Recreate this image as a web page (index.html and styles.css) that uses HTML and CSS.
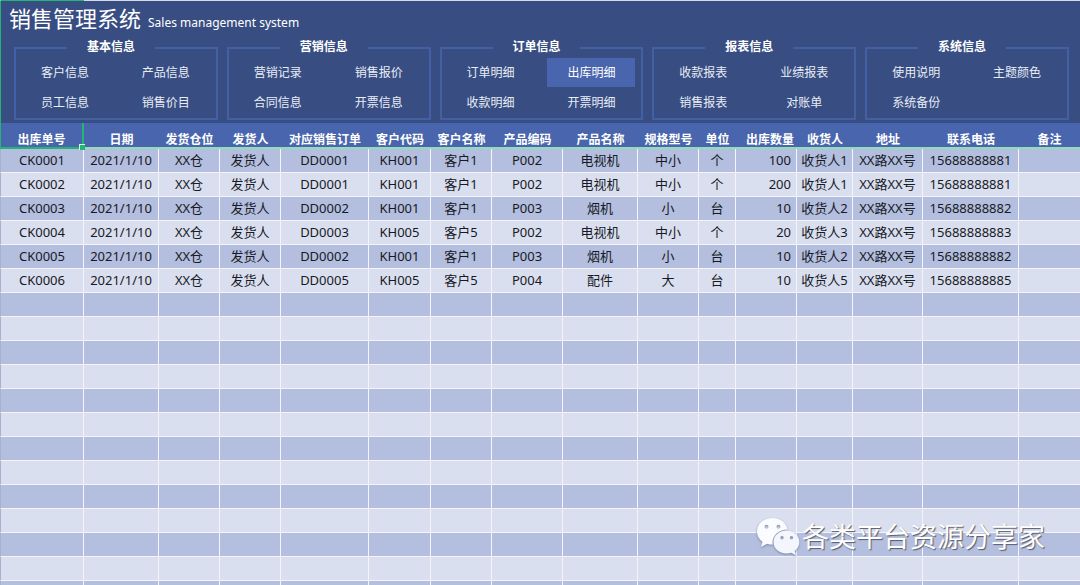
FILE: index.html
```html
<!DOCTYPE html>
<html lang="zh-CN">
<head>
<meta charset="utf-8">
<meta name="viewport" content="width=device-width, initial-scale=1">
<title>销售管理系统</title>
<link rel="stylesheet" href="styles.css">
</head>
<body>
<header class="top">
  <div class="brand"><h1>销售管理系统</h1><span>Sales management system</span></div>
  <nav class="panels">
    <section class="panel"><h2>基本信息</h2><div class="links"><a href="#">客户信息</a><a href="#">产品信息</a><a href="#">员工信息</a><a href="#">销售价目</a></div></section>
    <section class="panel"><h2>营销信息</h2><div class="links"><a href="#">营销记录</a><a href="#">销售报价</a><a href="#">合同信息</a><a href="#">开票信息</a></div></section>
    <section class="panel"><h2>订单信息</h2><div class="links"><a href="#">订单明细</a><a href="#" class="active" aria-current="page">出库明细</a><a href="#">收款明细</a><a href="#">开票明细</a></div></section>
    <section class="panel"><h2>报表信息</h2><div class="links"><a href="#">收款报表</a><a href="#">业绩报表</a><a href="#">销售报表</a><a href="#">对账单</a></div></section>
    <section class="panel"><h2>系统信息</h2><div class="links"><a href="#">使用说明</a><a href="#">主题颜色</a><a href="#">系统备份</a></div></section>
  </nav>
</header>
<main>
<table class="sheet">
  <colgroup>
    <col class="w84"><col class="w75"><col class="w61"><col class="w61"><col class="w88"><col class="w62"><col class="w61"><col class="w71"><col class="w75"><col class="w61"><col class="w37"><col class="w61"><col class="w56"><col class="w70"><col class="w96"><col>
  </colgroup>
  <thead>
    <tr><th class="selected">出库单号</th><th>日期</th><th>发货仓位</th><th>发货人</th><th>对应销售订单</th><th>客户代码</th><th>客户名称</th><th>产品编码</th><th>产品名称</th><th>规格型号</th><th>单位</th><th class="num">出库数量</th><th>收货人</th><th>地址</th><th>联系电话</th><th>备注</th></tr>
  </thead>
  <tbody>
    <tr><td>CK0001</td><td>2021/1/10</td><td>XX仓</td><td>发货人</td><td>DD0001</td><td>KH001</td><td>客户1</td><td>P002</td><td>电视机</td><td>中小</td><td>个</td><td class="num">100</td><td>收货人1</td><td>XX路XX号</td><td>15688888881</td><td></td></tr>
    <tr><td>CK0002</td><td>2021/1/10</td><td>XX仓</td><td>发货人</td><td>DD0001</td><td>KH001</td><td>客户1</td><td>P002</td><td>电视机</td><td>中小</td><td>个</td><td class="num">200</td><td>收货人1</td><td>XX路XX号</td><td>15688888881</td><td></td></tr>
    <tr><td>CK0003</td><td>2021/1/10</td><td>XX仓</td><td>发货人</td><td>DD0002</td><td>KH001</td><td>客户1</td><td>P003</td><td>烟机</td><td>小</td><td>台</td><td class="num">10</td><td>收货人2</td><td>XX路XX号</td><td>15688888882</td><td></td></tr>
    <tr><td>CK0004</td><td>2021/1/10</td><td>XX仓</td><td>发货人</td><td>DD0003</td><td>KH005</td><td>客户5</td><td>P002</td><td>电视机</td><td>中小</td><td>个</td><td class="num">20</td><td>收货人3</td><td>XX路XX号</td><td>15688888883</td><td></td></tr>
    <tr><td>CK0005</td><td>2021/1/10</td><td>XX仓</td><td>发货人</td><td>DD0002</td><td>KH001</td><td>客户1</td><td>P003</td><td>烟机</td><td>小</td><td>台</td><td class="num">10</td><td>收货人2</td><td>XX路XX号</td><td>15688888882</td><td></td></tr>
    <tr><td>CK0006</td><td>2021/1/10</td><td>XX仓</td><td>发货人</td><td>DD0005</td><td>KH005</td><td>客户5</td><td>P004</td><td>配件</td><td>大</td><td>台</td><td class="num">10</td><td>收货人5</td><td>XX路XX号</td><td>15688888885</td><td></td></tr>
    <tr><td></td><td></td><td></td><td></td><td></td><td></td><td></td><td></td><td></td><td></td><td></td><td></td><td></td><td></td><td></td><td></td></tr>
    <tr><td></td><td></td><td></td><td></td><td></td><td></td><td></td><td></td><td></td><td></td><td></td><td></td><td></td><td></td><td></td><td></td></tr>
    <tr><td></td><td></td><td></td><td></td><td></td><td></td><td></td><td></td><td></td><td></td><td></td><td></td><td></td><td></td><td></td><td></td></tr>
    <tr><td></td><td></td><td></td><td></td><td></td><td></td><td></td><td></td><td></td><td></td><td></td><td></td><td></td><td></td><td></td><td></td></tr>
    <tr><td></td><td></td><td></td><td></td><td></td><td></td><td></td><td></td><td></td><td></td><td></td><td></td><td></td><td></td><td></td><td></td></tr>
    <tr><td></td><td></td><td></td><td></td><td></td><td></td><td></td><td></td><td></td><td></td><td></td><td></td><td></td><td></td><td></td><td></td></tr>
    <tr><td></td><td></td><td></td><td></td><td></td><td></td><td></td><td></td><td></td><td></td><td></td><td></td><td></td><td></td><td></td><td></td></tr>
    <tr><td></td><td></td><td></td><td></td><td></td><td></td><td></td><td></td><td></td><td></td><td></td><td></td><td></td><td></td><td></td><td></td></tr>
    <tr><td></td><td></td><td></td><td></td><td></td><td></td><td></td><td></td><td></td><td></td><td></td><td></td><td></td><td></td><td></td><td></td></tr>
    <tr><td></td><td></td><td></td><td></td><td></td><td></td><td></td><td></td><td></td><td></td><td></td><td></td><td></td><td></td><td></td><td></td></tr>
    <tr><td></td><td></td><td></td><td></td><td></td><td></td><td></td><td></td><td></td><td></td><td></td><td></td><td></td><td></td><td></td><td></td></tr>
    <tr><td></td><td></td><td></td><td></td><td></td><td></td><td></td><td></td><td></td><td></td><td></td><td></td><td></td><td></td><td></td><td></td></tr>
    <tr><td></td><td></td><td></td><td></td><td></td><td></td><td></td><td></td><td></td><td></td><td></td><td></td><td></td><td></td><td></td><td></td></tr>
  </tbody>
</table>
</main>
<div class="watermark">
  <svg width="44" height="40" viewBox="0 0 44 40" aria-hidden="true">
    <path fill="#fbfcff" fill-rule="evenodd" d="M16.500 1C7.500 1 1 7 1 14.500c0 4.200 2.100 7.700 5.500 10.200L5 30l6-3.200c2 .6 3.700.8 5.700.8-1.500-8 5.500-15.300 15-15.200C30 5.500 24 1 16.500 1ZM10.500 7.800a2 2 0 1 1 0 4 2 2 0 0 1 0-4Zm12 0a2 2 0 1 1 0 4 2 2 0 0 1 0-4Z"/>
    <path fill="#f3f6fc" fill-rule="evenodd" d="M30.500 13.500C23 13.500 17.500 18.700 17.500 25s5.500 11.500 13 11.500c1.700 0 3.200-.3 4.700-.8l4.800 2.500-1.400-4.200c3-2.200 4.700-5.200 4.700-9 0-6.300-5.400-11.500-12.800-11.500ZM26 19a1.700 1.700 0 1 1 0 3.400A1.700 1.700 0 0 1 26 19Zm9.500 0a1.700 1.700 0 1 1 0 3.400 1.700 1.700 0 0 1 0-3.400Z"/>
  </svg>
  <span>各类平台资源分享家</span>
</div>
</body>
</html>
```

FILE: styles.css
```css
* { box-sizing: border-box; }
html, body { height: 100%; }
body {
  margin: 0;
  overflow: hidden;
  position: relative;
  background: #dadfef;
  color: #161a24;
  font: 13px/18px "Noto Sans", "Noto Sans CJK SC", sans-serif;
}
.top {
  background: #384e82;
  border-top: 1px solid #d5dae5;
  border-left: 1px solid #22b573;
  padding: 3px 11px 3px 8px;
  color: #fff;
  position: relative;
}
.top::before {
  content: "";
  position: absolute;
  top: -1px;
  left: 0;
  width: 83px;
  height: 1px;
  background: #22b573;
}
.brand { display: flex; align-items: baseline; gap: 7px; height: 34px; }
.brand h1 { margin: 0; font-size: 22px; line-height: 28px; font-weight: 400; }
.brand span { font-size: 12px; }
.panels { display: grid; grid-template-columns: repeat(5, 1fr); gap: 9px; padding-left: 5px; }
.panel {
  border: solid #4360a5;
  border-width: 0 2px 2px;
  height: 73px;
  margin-top: 9px;
}
.panel h2 {
  display: flex;
  align-items: flex-start;
  justify-content: space-between;
  margin: -9px 0 0;
  font-size: 12px;
  line-height: 18px;
  height: 18px;
}
.panel h2::before, .panel h2::after {
  content: "";
  height: 2px;
  margin-top: 9px;
  background: #4360a5;
  width: 51px;
}
.panel h2::after { width: 61px; }
.links {
  display: grid;
  grid-template-columns: 1fr 1fr;
  gap: 1px 13px;
  padding: 2px 6px 0 5px;
  font-size: 12px;
}
.links a {
  color: #e9edf6;
  text-decoration: none;
  text-align: center;
  line-height: 30px;
  height: 29px;
}
.links .active { background: #4965ad; color: #fff; }

.sheet { width: 100%; table-layout: fixed; border-collapse: separate; border-spacing: 0; white-space: nowrap; }
.w37 { width: 37px; }
.w56 { width: 56px; }
.w61 { width: 61px; }
.w62 { width: 62px; }
.w70 { width: 70px; }
.w71 { width: 71px; }
.w75 { width: 75px; }
.w84 { width: 84px; }
.w88 { width: 88px; }
.w96 { width: 96px; }
.sheet th {
  height: 26px;
  padding: 10px 0 0;
  background: #4965ad;
  color: #fff;
  font-size: 12px;
  font-weight: 700;
  line-height: 14px;
  border-bottom: 2px solid #91dcb9;
}
.sheet th.num { text-align: right; padding-right: 3px; }
.sheet th.selected {
  position: relative;
  border-left: 1px solid #22b573;
  border-right: 2px solid #22b573;
  border-bottom-color: #22b573;
}
.selected::after {
  content: "";
  position: absolute;
  right: -3px;
  bottom: -3px;
  width: 5px;
  height: 5px;
  background: #22b573;
  border: solid #d6f2e4;
  border-width: 1px 0 0 1px;
}
.sheet td {
  height: 24px;
  padding: 0 0 2px;
  text-align: center;
  line-height: 20px;
  border-right: 1px solid #f3f5fb;
  border-bottom: 1px solid #f3f5fb;
}
.sheet td:first-child { border-left: 1px solid #a9b2cd; }
.sheet td:last-child { border-right: 0; }
.sheet tbody tr:nth-child(odd) { background: #b4bede; }
.sheet tbody tr:nth-child(even) { background: #dadfef; }
.sheet td.num { text-align: right; padding-right: 5px; }

.watermark {
  position: absolute;
  right: 35px;
  bottom: 28px;
  display: flex;
  align-items: center;
  gap: 2px;
  color: #fff;
  font-size: 27px;
  line-height: 40px;
  text-shadow: 1px 1px 1px #555b69;
}
.watermark svg { filter: drop-shadow(0 1px 1px #7c87a3); }
```
